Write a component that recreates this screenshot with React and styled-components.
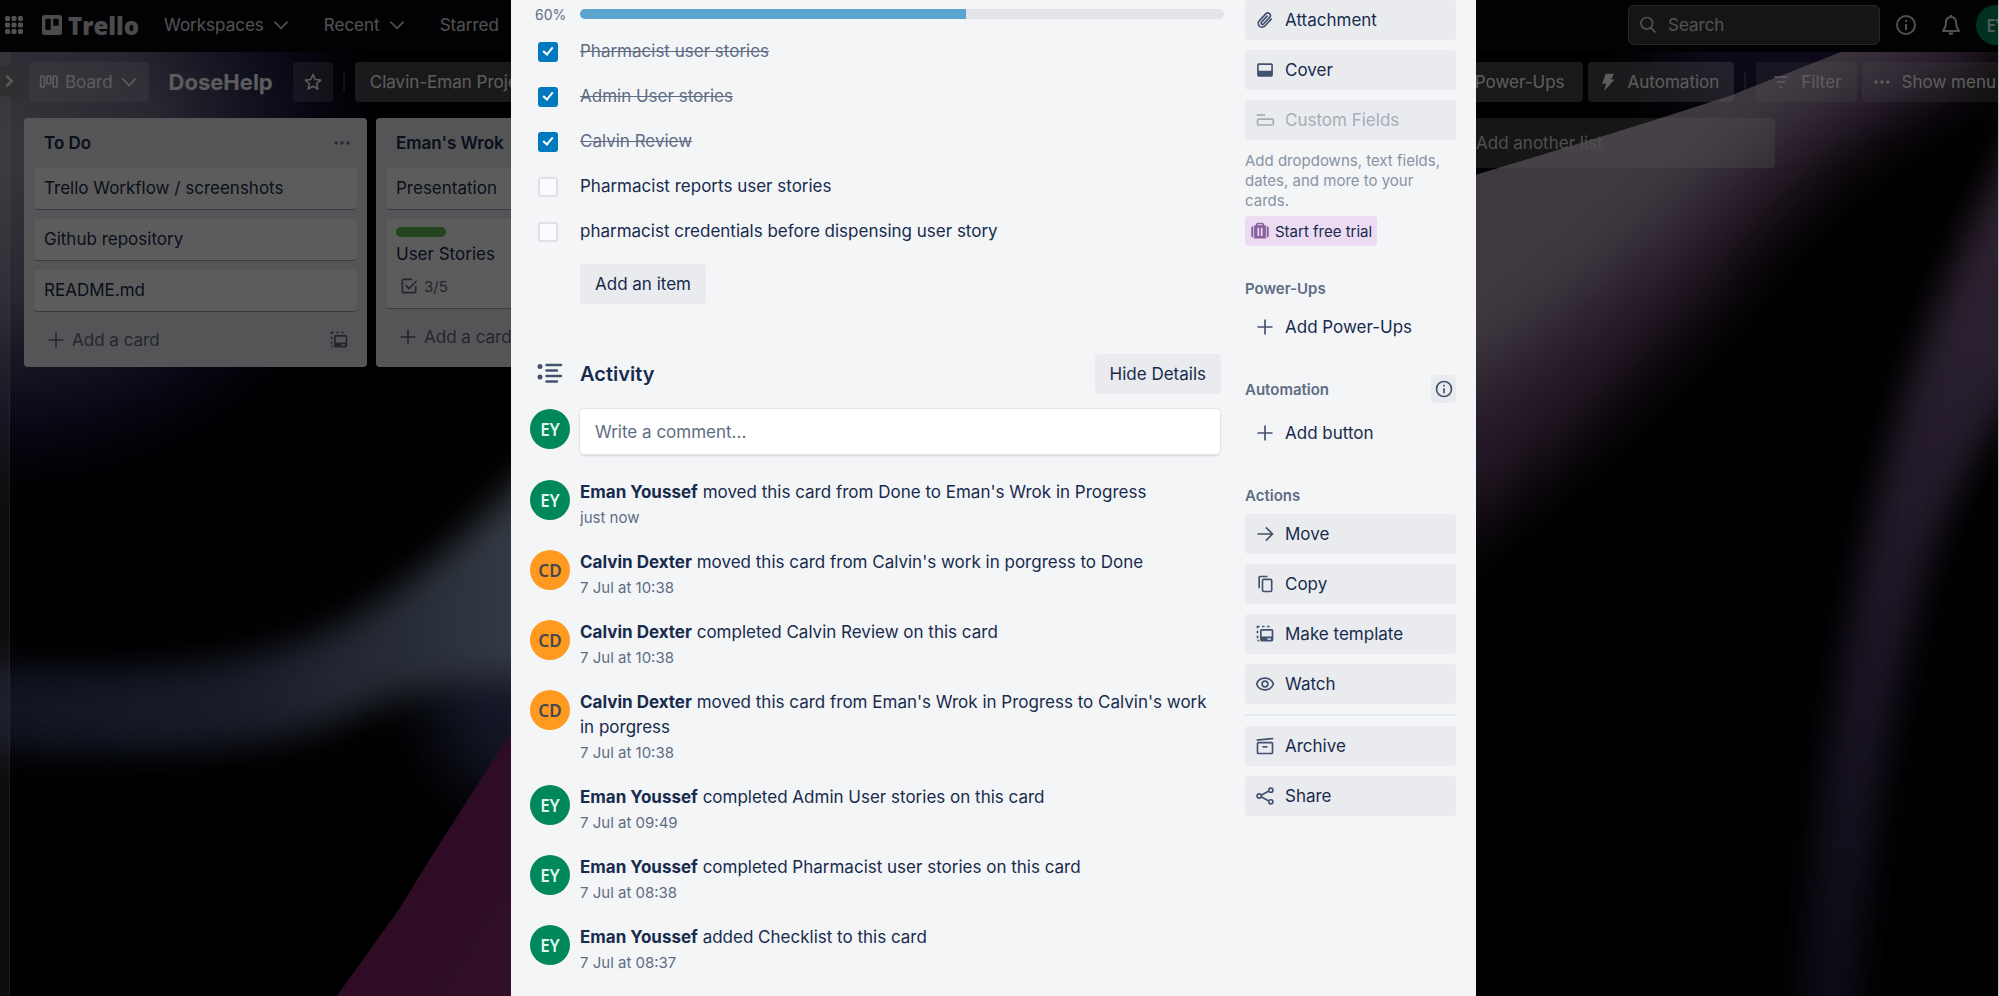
import React from 'react';
import styled, { createGlobalStyle } from 'styled-components';

const Global = createGlobalStyle`
  *, *::before, *::after { box-sizing: border-box; }
  html, body, #root { height: 100%; }
  body { margin: 0; background: #000; overflow: hidden; }
  body, button, input { font-family: Inter, "Liberation Sans", sans-serif; font-size: 17px; line-height: 25px; }
  button, input { margin: 0; border: 0; padding: 0; background: none; color: inherit; }
  h1, h2, h3, p, ul { margin: 0; padding: 0; font-size: inherit; list-style: none; }
`;

/* ---------- icons ---------- */
const Svg = styled.svg`
  display: block;
  flex: none;
  width: ${p => p.$s || 20}px;
  height: ${p => p.$s || 20}px;
  fill: none;
  stroke: currentColor;
  stroke-width: ${p => p.$w || 2};
`;
const Icon = ({ s, w, children }) => <Svg viewBox="0 0 24 24" $s={s} $w={w} aria-hidden="true">{children}</Svg>;

const GridIcon = () => (
  <Icon s={24}>
    <g fill="currentColor" stroke="none">
      {[3, 9.5, 16].map(y => [3, 9.5, 16].map(x => <rect key={`${x}-${y}`} x={x} y={y} width="5" height="5" rx="1.6" />))}
    </g>
  </Icon>
);
const TrelloMark = () => (
  <Icon s={20}>
    <path fill="currentColor" stroke="none" fillRule="evenodd" d="M3 0h18a3 3 0 0 1 3 3v18a3 3 0 0 1-3 3H3a3 3 0 0 1-3-3V3a3 3 0 0 1 3-3Zm2 4.500a1 1 0 0 0-1 1V17a1 1 0 0 0 1 1h4.500a1 1 0 0 0 1-1V5.500a1 1 0 0 0-1-1Zm9.500 0a1 1 0 0 0-1 1V12a1 1 0 0 0 1 1H19a1 1 0 0 0 1-1V5.500a1 1 0 0 0-1-1Z" />
  </Icon>
);
const Chevron = () => <Icon s={20} w={2}><path d="M4 8l8 8 8-8" /></Icon>;
const ChevronRight = () => <Icon s={16} w={4}><path d="M8 4l8 8-8 8" /></Icon>;
const BoardIcon = () => <Icon s={20} w={2}><rect x="2" y="5" width="4.500" height="13" rx="1" /><rect x="9.500" y="5" width="4.500" height="9" rx="1" /><rect x="17" y="5" width="4.500" height="13" rx="1" /></Icon>;
const StarIcon = () => <Icon s={20} w={2}><path strokeLinejoin="round" d="M12 3l2.700 6 6.500.7-4.900 4.400 1.400 6.400L12 17.200l-5.700 3.300 1.400-6.400-4.900-4.400 6.500-.7Z" /></Icon>;
const Dots = () => <Icon s={20}><g fill="currentColor" stroke="none"><circle cx="5" cy="12" r="2" /><circle cx="12" cy="12" r="2" /><circle cx="19" cy="12" r="2" /></g></Icon>;
const Plus = () => <Icon s={20} w={2}><path d="M12 3v18M3 12h18" /></Icon>;
const TemplateIcon = () => (
  <Icon s={20} w={2}>
    <path d="M3 17v-3M3 11V8M3 5V3h2.500M8.500 3h3M14.500 3h3M3 20h2" />
    <path fill="currentColor" fillRule="evenodd" stroke="none" d="M8 6h12a2 2 0 0 1 2 2v11a2 2 0 0 1-2 2H8a2 2 0 0 1-2-2V8a2 2 0 0 1 2-2Zm0 2v7h12V8Zm7 9v2h4v-2Z" />
  </Icon>
);
const CheckBadge = () => <Icon s={20} w={2}><path d="M20 12v7a1 1 0 0 1-1 1H5a1 1 0 0 1-1-1V5a1 1 0 0 1 1-1h11M8 11l4 4 9-9" /></Icon>;
const SearchIcon = () => <Icon s={20} w={2}><circle cx="10.500" cy="10" r="7" /><path d="M15.500 15.500L21 21" /></Icon>;
const InfoIcon = ({ s }) => <Icon s={s || 24} w={2}><circle cx="12" cy="12" r="9" /><path d="M12 11v6M12 7v2" /></Icon>;
const BellIcon = () => <Icon s={24} w={2}><path strokeLinejoin="round" d="M12 4c-3.500 0-5 2.500-5 5.500C7 14 5.500 15.500 4 18h16c-1.500-2.500-3-4-3-8.500C17 6.500 15.500 4 12 4Z" /><path d="M12 2v2" /><path fill="currentColor" stroke="none" d="M9.500 19.500h5a2.500 2.500 0 0 1-5 0Z" /></Icon>;
const Bolt = () => <Icon s={20}><path fill="currentColor" stroke="none" d="M9 2h10l-3 7h4L7 23l3-9H5Z" /></Icon>;
const FilterIcon = () => <Icon s={20} w={2}><path d="M4 6h16M7 12h10" /><path d="M10.500 18h3" /></Icon>;
const Clip = () => <Icon s={20} w={2}><path strokeLinecap="round" d="M19.500 11l-7.600 8.200a4.600 4.600 0 0 1-6.800-6.200l8-8.700a3.200 3.200 0 0 1 4.700 4.300l-7.600 8.200a1.600 1.600 0 0 1-2.400-2.200l6.700-7.200" /></Icon>;
const CoverIcon = () => <Icon s={20}><path fill="currentColor" stroke="none" fillRule="evenodd" d="M4.500 4h15a2 2 0 0 1 2 2v12a2 2 0 0 1-2 2h-15a2 2 0 0 1-2-2V6a2 2 0 0 1 2-2Zm0 2v7h15V6Z" /></Icon>;
const FieldsIcon = () => <Icon s={20} w={2}><path d="M2 6h10" /><rect x="3" y="11" width="19" height="7" rx="1.500" /></Icon>;
const CaseIcon = () => <Icon s={20} w={2}><path fill="currentColor" stroke="none" d="M4 6v14a3 3 0 0 1-2.500-3V9A3 3 0 0 1 4 6Zm16 0v14a3 3 0 0 0 2.500-3V9A3 3 0 0 0 20 6Z" /><path d="M8 6V4.500A1.500 1.500 0 0 1 9.500 3h5A1.500 1.500 0 0 1 16 4.500V6" /><path fill="currentColor" stroke="none" fillRule="evenodd" d="M5 5h14v16H5Zm4 3v10h2V8Zm4 0v10h2V8Z" /></Icon>;
const ArrowIcon = () => <Icon s={20} w={2}><path d="M3 12h17M13 4l8 8-8 8" /></Icon>;
const CopyIcon = () => <Icon s={20} w={2}><path d="M5 17V4a1 1 0 0 1 1-1h9" /><rect x="9" y="6.500" width="11" height="14.500" rx="1.500" /></Icon>;
const EyeIcon = () => <Icon s={20} w={2}><path d="M2 12C5 2.700 19 2.700 22 12 19 21.300 5 21.300 2 12Z" /><circle cx="12" cy="12" r="3.500" /></Icon>;
const ArchiveIcon = () => <Icon s={20} w={2}><path d="M2 5l20-2" /><rect x="3" y="8" width="18" height="13" rx="1" /><path d="M9 13h6" /></Icon>;
const ShareIcon = () => <Icon s={20} w={2}><circle cx="5" cy="12" r="2.500" /><circle cx="19" cy="5" r="2.500" /><circle cx="19" cy="19" r="2.500" /><path d="M7.500 11l9-5M7.500 13l9 5" /></Icon>;
const ActivityIcon = () => (
  <Svg viewBox="0 0 30 30" $s={30} $w={2.4} aria-hidden="true">
    <path strokeLinecap="round" d="M11.500 6H26M11.500 11.500H22M11.500 17H26M11.500 22.500H22" />
    <g fill="currentColor" stroke="none"><circle cx="5" cy="7.500" r="2.500" /><circle cx="5" cy="18" r="2.500" /></g>
  </Svg>
);

/* ---------- wallpaper ---------- */
const Wall = styled.svg`
  position: absolute;
  inset: 0;
  width: 100%;
  height: 100%;
`;
const Wallpaper = () => (
  <Wall viewBox="0 0 1999 996" preserveAspectRatio="none" aria-hidden="true">
    <defs>
      <radialGradient id="corner">
        <stop offset="0" stopColor="#9d96a8" />
        <stop offset=".4" stopColor="#746c86" />
        <stop offset=".75" stopColor="#222253" stopOpacity=".8" />
        <stop offset="1" stopColor="#060c22" stopOpacity="0" />
      </radialGradient>
      <linearGradient id="ribbon" gradientUnits="userSpaceOnUse" x1="0" y1="0" x2="520" y2="0">
        <stop offset="0" stopColor="#30365e" />
        <stop offset=".45" stopColor="#465073" />
        <stop offset=".78" stopColor="#6d7c98" />
        <stop offset="1" stopColor="#93a4be" />
      </linearGradient>
      <linearGradient id="plum" x1="0" y1="0" x2="1" y2="1">
        <stop offset="0" stopColor="#6a0c4c" />
        <stop offset="1" stopColor="#93397e" />
      </linearGradient>
      <linearGradient id="streak" x1="0" y1="0" x2="0" y2="1">
        <stop offset="0" stopColor="#8c6288" />
        <stop offset=".3" stopColor="#715680" />
        <stop offset=".6" stopColor="#4e3b66" />
        <stop offset="1" stopColor="#20203e" />
      </linearGradient>
      <filter id="soft" x="-20%" y="-20%" width="140%" height="140%"><feGaussianBlur stdDeviation="17" /></filter>
      <filter id="haze" x="-30%" y="-30%" width="160%" height="160%"><feGaussianBlur stdDeviation="34" /></filter>
      <clipPath id="wedge"><path d="M1100 300L1476 175Q1640 126 1733 95L1842 52V0H1999V996H1100Z" /></clipPath>
    </defs>
    <rect width="1999" height="996" fill="#000" />
    <ellipse cx="0" cy="150" rx="400" ry="360" fill="url(#corner)" />
    <ellipse cx="520" cy="690" rx="90" ry="110" fill="#38406c" filter="url(#haze)" />
    <path filter="url(#soft)" fill="url(#ribbon)" d="M-60 660Q180 685 300 642Q430 596 600 390V680Q450 665 350 716Q240 768-60 746Z" />
    <path fill="url(#plum)" d="M337 996L400 908L430 859L511 733L700 440V996Z" />
    <ellipse cx="1790" cy="60" rx="150" ry="50" fill="#2c2452" filter="url(#haze)" />
    <g clipPath="url(#wedge)">
      <path filter="url(#haze)" fill="#68446c" d="M1200 100L1999-60V60Q1840 130 1720 290Q1570 460 1360 610Z" />
      <path filter="url(#haze)" fill="#ac9eb2" d="M1200 100L1999-120V0Q1850 70 1710 190Q1560 340 1360 450Z" />
    </g>
    <path filter="url(#soft)" fill="url(#streak)" d="M2060 60Q1940 260 1890 450Q1824 680 1800 1040H1856Q1873 780 1928 570Q1968 440 2060 340Z" />
  </Wall>
);

/* ---------- board page ---------- */
const Page = styled.div`
  position: relative;
  height: 100%;
  overflow: hidden;
  border-right: 1px solid #c4c4c4;
  color: #fff;
`;
const Board = styled.div`
  position: relative;
  height: 100%;
`;
const TopNav = styled.header`
  display: flex;
  align-items: center;
  height: 52px;
  padding: 0 0 2px 2px;
  background: #08080c;
  color: #e0e0e4;
`;
const NavIconButton = styled.button`
  display: grid;
  place-items: center;
  width: 45px;
  height: 40px;
  flex: none;
`;
const AppsButton = styled(NavIconButton)`
  width: 24px;
  margin-right: 16px;
`;
const Brand = styled.a`
  display: flex;
  align-items: center;
  gap: 6px;
  width: 122px;
  color: #d0d0d4;
  text-decoration: none;
  font-family: "Open Sans", sans-serif;
  font-size: 24px;
  font-weight: 800;
`;
const NavItem = styled.button`
  display: flex;
  align-items: center;
  gap: 7px;
  margin-right: 33px;
  flex: none;
`;
const SearchBox = styled.label`
  display: flex;
  align-items: center;
  gap: 10px;
  width: 252px;
  height: 40px;
  margin: 0 3px 0 auto;
  padding: 0 9px;
  border: 1px solid #707070;
  border-radius: 6px;
  background: #3c3c3c;
  input { min-width: 0; flex: 1; outline: 0; }
  input::placeholder { color: #e0e0e4; opacity: 1; }
`;
const Avatar = styled.span`
  display: grid;
  place-items: center;
  flex: none;
  width: 40px;
  height: 40px;
  border-radius: 50%;
  font-family: "Noto Sans", sans-serif;
  font-size: 17px;
  font-weight: 600;
  background: ${p => (p.$who === 'CD' ? '#ff991f' : '#00875a')};
  color: ${p => (p.$who === 'CD' ? '#42484f' : '#dff5ec')};
`;
const NavAvatar = styled(Avatar)`
  margin-left: 3px;
  margin-right: -18px;
`;
const Rail = styled.div`
  position: absolute;
  top: 52px;
  bottom: 0;
  left: 0;
  width: 10px;
  background: rgba(255, 255, 255, 0.16);
  border-right: 1px solid rgba(255, 255, 255, 0.16);
`;
const RailToggle = styled.button`
  position: absolute;
  top: 13px;
  left: -7px;
  display: grid;
  place-items: center;
  width: 32px;
  height: 32px;
  border-radius: 50%;
  background: #858088;
  color: #f0f0f0;
`;
const BoardBar = styled.div`
  display: flex;
  align-items: center;
  gap: 5px;
  height: 60px;
  padding-left: 29px;
`;
const BarButton = styled.button`
  display: flex;
  align-items: center;
  gap: ${p => p.$gap || 6}px;
  height: 40px;
  flex: none;
  padding: 0 ${p => p.$pad || 10}px 0 ${p => p.$start || p.$pad || 10}px;
  border-radius: 4px;
  white-space: nowrap;
  background: rgba(255, 255, 255, ${p => p.$alpha || 0.28});
`;
const BarDivider = styled.span`
  width: 2px;
  height: 20px;
  margin: 0 5px;
  background: rgba(255, 255, 255, 0.16);
`;
const BoardTitle = styled.h1`
  padding: 0 15px;
  font-size: 22px;
  font-weight: 700;
`;
const BarRight = styled.div`
  display: flex;
  align-items: center;
  gap: 5px;
  margin-left: auto;
  margin-right: -8px;
`;
const Lists = styled.div`
  display: flex;
  align-items: flex-start;
  gap: 9px;
  padding: 6px 24px;
`;
const List = styled.section`
  width: 343px;
  flex: none;
  min-height: 249px;
  padding: 0 10px;
  border-radius: 4px;
  background: #ebecf0;
  color: #172b4d;
`;
const ListHead = styled.div`
  display: flex;
  align-items: center;
  justify-content: space-between;
  height: 50px;
  padding: 0 5px 0 10px;
  color: #6b778c;
  h2 { font-weight: 600; color: #172b4d; white-space: nowrap; }
`;
const Cards = styled.ul`
  display: grid;
  gap: 10px;
`;
const Card = styled.li`
  min-height: 41px;
  padding: 8px 10px;
  border-radius: 4px;
  background: #fff;
  box-shadow: 0 1px 0 rgba(9, 30, 66, 0.35);
`;
const Label = styled.span`
  display: block;
  width: 50px;
  height: 10px;
  margin-bottom: 5px;
  border-radius: 5px;
  background: #61bd4f;
`;
const Badge = styled.span`
  display: flex;
  align-items: center;
  gap: 5px;
  height: 28px;
  margin-top: 5px;
  padding-left: 3px;
  font-size: 15px;
  color: #5e6c84;
`;
const ListFoot = styled.div`
  display: flex;
  align-items: center;
  justify-content: space-between;
  height: 56px;
  padding: 2px 8px 0 12px;
  color: #5e6c84;
`;
const AddCard = styled.button`
  display: flex;
  align-items: center;
  gap: 6px;
`;
const AddList = styled.button`
  display: flex;
  align-items: center;
  gap: 6px;
  width: 343px;
  height: 50px;
  flex: none;
  padding-left: 18px;
  border-radius: 4px;
  color: #d8d8d8;
  background: rgba(255, 255, 255, 0.24);
`;

/* ---------- card dialog ---------- */
const Overlay = styled.div`
  position: absolute;
  inset: 0;
  display: flex;
  justify-content: center;
  background: rgba(0, 0, 0, 0.64);
`;
const Dialog = styled.div`
  display: flex;
  gap: 24px;
  width: 965px;
  min-height: 100%;
  margin-right: 11px;
  padding: 0 20px 0 19px;
  background: #f4f5f7;
  color: #172b4d;
`;
const Main = styled.main`
  flex: 1;
  min-width: 0;
`;
const Row = styled.div`
  display: grid;
  grid-template-columns: 40px 1fr;
  column-gap: 10px;
`;
const ProgressRow = styled(Row)`
  align-items: center;
  height: 28px;
  margin-right: -3px;
  font-size: 14px;
  color: #5e6c84;
  span { padding-left: 5px; }
`;
const Track = styled.div`
  height: 10px;
  overflow: hidden;
  border-radius: 5px;
  background: #e2e4e9;
`;
const Fill = styled.div`
  height: 100%;
  background: #5ba4cf;
`;
const CheckRow = styled.label`
  display: grid;
  grid-template-columns: 50px 1fr;
  align-items: center;
  height: 45px;
  color: ${p => (p.$done ? '#5e6c84' : '#172b4d')};
  text-decoration: ${p => (p.$done ? 'line-through' : 'none')};
`;
const Tick = styled.input.attrs({ type: 'checkbox' })`
  appearance: none;
  display: grid;
  place-items: center;
  width: 20px;
  height: 20px;
  margin-left: 8px;
  border: 2px solid #dfe1e6;
  border-radius: 3px;
  background: #fafbfc;
  &:checked { border-color: #0079bf; background: #0079bf; }
  &:checked::after {
    content: "";
    width: 6px;
    height: 10px;
    margin-bottom: 3px;
    border: solid #fff;
    border-width: 0 2px 2px 0;
    transform: rotate(40deg);
  }
`;
const Checklist = styled.div`
  margin: 1px 0 10px;
`;
const GrayButton = styled.button`
  height: 40px;
  padding: 0 15px;
  border-radius: 4px;
  background: #eaebef;
  white-space: nowrap;
`;
const AddItem = styled(GrayButton)`
  margin-left: 50px;
`;
const ActivityHead = styled(Row)`
  grid-template-columns: 40px 1fr auto;
  align-items: center;
  margin-top: 50px;
  color: #42526e;
  svg { margin-left: 5px; }
  h2 { font-size: 20px; font-weight: 600; color: #172b4d; }
  button { color: #172b4d; }
`;
const CommentRow = styled(Row)`
  margin: 15px 1px 26px 0;
`;
const Comment = styled.input`
  width: 100%;
  height: 45px;
  padding: 0 15px;
  border-radius: 4px;
  background: #fff;
  box-shadow: 0 0 0 1px #e3e5ea, 0 2px 2px #d5d8df;
  outline: 0;
  &::placeholder { color: #5e6c84; opacity: 1; }
`;
const Feed = styled.ul`
  display: grid;
  gap: 20px;
`;
const Entry = styled(Row).attrs({ as: 'li' })`
  b { font-weight: 700; }
  time { display: block; font-size: 15px; color: #5e6c84; }
`;
const Side = styled.aside`
  width: 211px;
  flex: none;
`;
const SideStack = styled.div`
  display: grid;
  gap: 10px;
  margin-top: ${p => p.$top || 0}px;
`;
const SideButton = styled.button`
  display: flex;
  align-items: center;
  gap: 10px;
  height: 40px;
  padding: 0 10px;
  border-radius: 4px;
  background: ${p => (p.$plain ? 'transparent' : '#eaebef')};
  color: ${p => (p.disabled ? '#a5adba' : '#172b4d')};
  svg { color: ${p => (p.disabled ? '#a5adba' : '#42526e')}; }
`;
const SideHeading = styled.div`
  display: flex;
  align-items: center;
  justify-content: space-between;
  height: 28px;
  margin-top: ${p => p.$top}px;
  font-size: 15px;
  color: #5e6c84;
  h3 { font-weight: 600; }
`;
const InfoButton = styled.button`
  display: grid;
  place-items: center;
  width: 25px;
  height: 28px;
  border-radius: 4px;
  background: #eaebef;
  color: #42526e;
`;
const Hint = styled.p`
  margin-top: 11px;
  font-size: 15px;
  line-height: 20px;
  color: #8993a4;
`;
const Trial = styled.button`
  display: flex;
  align-items: center;
  gap: 5px;
  height: 30px;
  margin-top: 5px;
  padding: 0 5px;
  border-radius: 4px;
  background: #eddbf4;
  font-size: 15px;
  svg { color: #89609e; }
`;
const Rule = styled.hr`
  width: 100%;
  height: 2px;
  margin: 0;
  border: 0;
  background: #e6e9f0;
`;

const checks = [
  ['Pharmacist user stories', true],
  ['Admin User stories', true],
  ['Calvin Review', true],
  ['Pharmacist reports user stories', false],
  ['pharmacist credentials before dispensing user story', false],
];
const EY = ['EY', 'Eman Youssef'];
const CD = ['CD', 'Calvin Dexter'];
const feed = [
  [EY, "moved this card from Done to Eman's Wrok in Progress", 'just now'],
  [CD, "moved this card from Calvin's work in porgress to Done", '7 Jul at 10:38'],
  [CD, 'completed Calvin Review on this card', '7 Jul at 10:38'],
  [CD, "moved this card from Eman's Wrok in Progress to Calvin's work in porgress", '7 Jul at 10:38'],
  [EY, 'completed Admin User stories on this card', '7 Jul at 09:49'],
  [EY, 'completed Pharmacist user stories on this card', '7 Jul at 08:38'],
  [EY, 'added Checklist to this card', '7 Jul at 08:37'],
];

const Footer = () => (
  <ListFoot>
    <AddCard><Plus />Add a card</AddCard>
    <TemplateIcon />
  </ListFoot>
);

export default function App() {
  const done = checks.filter(c => c[1]).length / checks.length;
  return (
    <>
      <Global />
      <Page>
        <Wallpaper />
        <Board>
          <TopNav>
            <AppsButton aria-label="Apps"><GridIcon /></AppsButton>
            <Brand href="#"><TrelloMark />Trello</Brand>
            <NavItem>Workspaces<Chevron /></NavItem>
            <NavItem>Recent<Chevron /></NavItem>
            <NavItem>Starred</NavItem>
            <SearchBox><SearchIcon /><input placeholder="Search" aria-label="Search" /></SearchBox>
            <NavIconButton aria-label="Information"><InfoIcon /></NavIconButton>
            <NavIconButton aria-label="Notifications"><BellIcon /></NavIconButton>
            <NavAvatar $who="EY">EY</NavAvatar>
          </TopNav>
          <Rail><RailToggle aria-label="Expand sidebar"><ChevronRight /></RailToggle></Rail>
          <BoardBar>
            <BarButton $alpha={0.16}><BoardIcon />Board<Chevron /></BarButton>
            <BoardTitle>DoseHelp</BoardTitle>
            <BarButton $alpha={0.16} aria-label="Star board"><StarIcon /></BarButton>
            <BarDivider />
            <BarButton $pad={15}>Clavin-Eman Project</BarButton>
            <BarRight>
              <BarButton $pad={18}>Power-Ups</BarButton>
              <BarButton $pad={15} $start={10} $gap={10}><Bolt />Automation</BarButton>
              <BarDivider />
              <BarButton $pad={15} $gap={10} $alpha={0.16}><FilterIcon />Filter</BarButton>
              <BarButton $gap={10} $alpha={0.16}><Dots />Show menu</BarButton>
            </BarRight>
          </BoardBar>
          <Lists>
            <List>
              <ListHead><h2>To Do</h2><Dots /></ListHead>
              <Cards>
                <Card>Trello Workflow / screenshots</Card>
                <Card>Github repository</Card>
                <Card>README.md</Card>
              </Cards>
              <Footer />
            </List>
            <List>
              <ListHead><h2>Eman's Wrok</h2></ListHead>
              <Cards>
                <Card>Presentation</Card>
                <Card><Label />User Stories<Badge><CheckBadge />3/5</Badge></Card>
              </Cards>
              <Footer />
            </List>
            <List />
            <List />
            <AddList><Plus />Add another list</AddList>
          </Lists>
        </Board>
        <Overlay>
          <Dialog role="dialog" aria-label="User Stories">
            <Main>
              <ProgressRow>
                <span>60%</span>
                <Track><Fill style={{ width: `${done * 100}%` }} /></Track>
              </ProgressRow>
              <Checklist>
                {checks.map(([text, on]) => (
                  <CheckRow key={text} $done={on}><Tick defaultChecked={on} />{text}</CheckRow>
                ))}
              </Checklist>
              <AddItem>Add an item</AddItem>
              <ActivityHead>
                <ActivityIcon />
                <h2>Activity</h2>
                <GrayButton>Hide Details</GrayButton>
              </ActivityHead>
              <CommentRow>
                <Avatar $who="EY">EY</Avatar>
                <Comment placeholder="Write a comment..." aria-label="Write a comment" />
              </CommentRow>
              <Feed>
                {feed.map(([who, text, time], i) => (
                  <Entry key={i}>
                    <Avatar $who={who[0]}>{who[0]}</Avatar>
                    <div><b>{who[1]}</b> {text}<time>{time}</time></div>
                  </Entry>
                ))}
              </Feed>
            </Main>
            <Side>
              <SideStack>
                <SideButton><Clip />Attachment</SideButton>
                <SideButton><CoverIcon />Cover</SideButton>
                <SideButton disabled><FieldsIcon />Custom Fields</SideButton>
              </SideStack>
              <Hint>Add dropdowns, text fields, dates, and more to your cards.</Hint>
              <Trial><CaseIcon />Start free trial</Trial>
              <SideHeading $top={28}><h3>Power-Ups</h3></SideHeading>
              <SideStack $top={5}><SideButton $plain><Plus />Add Power-Ups</SideButton></SideStack>
              <SideHeading $top={28}><h3>Automation</h3><InfoButton aria-label="About automation"><InfoIcon s={20} /></InfoButton></SideHeading>
              <SideStack $top={10}><SideButton $plain><Plus />Add button</SideButton></SideStack>
              <SideHeading $top={28}><h3>Actions</h3></SideHeading>
              <SideStack $top={5}>
                <SideButton><ArrowIcon />Move</SideButton>
                <SideButton><CopyIcon />Copy</SideButton>
                <SideButton><TemplateIcon />Make template</SideButton>
                <SideButton><EyeIcon />Watch</SideButton>
                <Rule />
                <SideButton><ArchiveIcon />Archive</SideButton>
                <SideButton><ShareIcon />Share</SideButton>
              </SideStack>
            </Side>
          </Dialog>
        </Overlay>
      </Page>
    </>
  );
}
